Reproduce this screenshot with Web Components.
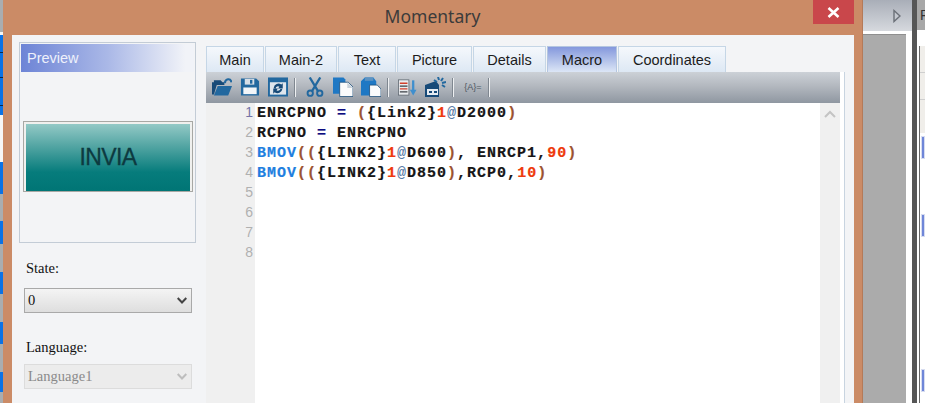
<!DOCTYPE html>
<html>
<head>
<meta charset="utf-8">
<title>Momentary</title>
<style>
  html, body { margin: 0; height: 403px; overflow: hidden; background: #ababab; }
  body { display: flex; font-family: "Liberation Sans", Arial, sans-serif; }
</style>
</head>
<body>
<side-strip></side-strip>
<app-dialog caption="Momentary">
  <preview-panel slot="left" label="INVIA"></preview-panel>
  <form-select slot="left" label="State:" value="0" gap="17"></form-select>
  <form-select slot="left" label="Language:" value="Language1" gap="26" disabled></form-select>
  <div slot="right" style="display:contents">
    <tab-bar active="Macro"></tab-bar>
    <macro-pane></macro-pane>
  </div>
</app-dialog>
<back-panel></back-panel>

<script>
// strip of the window behind the dialog, left edge
class SideStrip extends HTMLElement {
  constructor() {
    super();
    const rows = [[32,'g'],[3,'w'],[17,'b'],[1,'d'],[24,'b'],[1,'d'],[27,'b'],[1,'d'],[9,'b'],[47,'w'],[32,'b'],
      [27,'g'],[23,'b'],[28,'g'],[22,'b'],[28,'g'],[22,'b'],[28,'g'],[20,'b'],[10,'g']];
    this.attachShadow({ mode: 'open' }).innerHTML = `
      <style>
        :host { display: block; width: 3px; flex: none; height: 403px; overflow: hidden; }
        div { width: 3px; }
        .g { background: #a9adb0; } .w { background: #f6f6f6; } .b { background: #0b72e6; } .d { background: #0a2a50; }
      </style>
      ${rows.map(r => `<div class="${r[1]}" style="height:${r[0]}px"></div>`).join('')}`;
  }
}
customElements.define('side-strip', SideStrip);

// orange dialog frame with title bar
class AppDialog extends HTMLElement {
  constructor() {
    super();
    this.attachShadow({ mode: 'open' }).innerHTML = `
      <style>
        :host { display: flex; flex-direction: column; width: 860px; flex: none; height: 403px; box-sizing: border-box;
          background: #cb8b66; border-right: 1px solid #b57a58; padding: 0 8px 0 9px; overflow: hidden; }
        .bar { height: 35px; flex: none; display: grid; grid-template-columns: 1fr auto 1fr; margin-left: -1px; }
        .title { grid-column: 2; font: 17.500px "Noto Sans", sans-serif; color: #3b3b3b; line-height: 33px; }
        .close { grid-column: 3; justify-self: end; width: 41px; height: 24px; background: #c9474b;
          display: flex; align-items: center; justify-content: center; }
        .client { flex: 1; display: flex; background: #f3f4f6; padding: 7px 9px 0 7px; box-sizing: border-box; min-height: 0; }
        .left { width: 177px; flex: none; display: flex; flex-direction: column; }
        .right { flex: 1; margin: 4px 0 0 10px; display: flex; flex-direction: column; min-width: 0; }
      </style>
      <div class="bar">
        <div class="title">${this.getAttribute('caption')}</div>
        <div class="close"><svg width="13" height="11" viewBox="0 0 13 11"><path d="M1.500 1 L11.500 10 M11.500 1 L1.500 10" stroke="#fff" stroke-width="2.600" fill="none"/></svg></div>
      </div>
      <div class="client">
        <div class="left"><slot name="left"></slot></div>
        <div class="right"><slot name="right"></slot></div>
      </div>`;
  }
}
customElements.define('app-dialog', AppDialog);

class PreviewPanel extends HTMLElement {
  constructor() {
    super();
    this.attachShadow({ mode: 'open' }).innerHTML = `
      <style>
        :host { display: block; width: 177px; height: 201px; box-sizing: border-box; border: 1px solid #c3ccd6; padding: 1px; }
        .head { height: 28px; background: linear-gradient(90deg, #6d84d6, #aab8e7 50%, #f1f3f8 95%);
          color: #eef1fb; font-size: 14.500px; line-height: 28px; padding-left: 6px; }
        .btn { margin: 49px 0 0 2px; width: 170px; height: 71px; box-sizing: border-box; border: 1px solid #a8a8a4; padding: 2px 2px 0;
          background: #f0f0ee; }
        .face { height: 67px; background: linear-gradient(180deg, #93c9c6 0%, #4fa3a1 35%, #067c7c 72%, #007575 100%);
          display: flex; align-items: center; justify-content: center; font-size: 23px; color: #0d3a40; letter-spacing: -.6px; -webkit-text-stroke: .3px #0d3a40; }
      </style>
      <div class="head">Preview</div>
      <div class="btn"><div class="face">${this.getAttribute('label')}</div></div>`;
  }
}
customElements.define('preview-panel', PreviewPanel);

class FormSelect extends HTMLElement {
  constructor() {
    super();
    const off = this.hasAttribute('disabled');
    this.attachShadow({ mode: 'open' }).innerHTML = `
      <style>
        :host { display: block; font: 14.500px "Liberation Serif", serif; color: #111; margin-top: ${this.getAttribute('gap')}px; }
        label { display: block; height: 16px; line-height: 16px; padding-left: 7px; margin-bottom: ${off ? 9 : 12}px; }
        .box { margin-left: 5px; width: 168px; height: 25px; box-sizing: border-box; display: flex; align-items: center;
          justify-content: space-between; padding: 0 4px 0 3px;
          border: 1px solid ${off ? '#dcdcdc' : '#a9a9a9'};
          background: ${off ? '#ececec' : 'linear-gradient(180deg, #f4f4f4, #dedede)'};
          color: ${off ? '#8a8a8a' : '#111'}; }
      </style>
      <label>${this.getAttribute('label')}</label>
      <div class="box"><span>${this.getAttribute('value')}</span>
        <svg width="10" height="7" viewBox="0 0 10 7"><path d="M.7 1 L5 5.500 L9.300 1" fill="none" stroke="${off ? '#bdbdbd' : '#444'}" stroke-width="2"/></svg>
      </div>`;
  }
}
customElements.define('form-select', FormSelect);

class TabBar extends HTMLElement {
  constructor() {
    super();
    const tabs = [['Main',58],['Main-2',72],['Text',58],['Picture',75],['Details',73],['Macro',70],['Coordinates',108]];
    const active = this.getAttribute('active');
    this.attachShadow({ mode: 'open' }).innerHTML = `
      <style>
        :host { display: flex; gap: 1px; height: 26px; flex: none; }
        div { box-sizing: border-box; height: 26px; text-align: center; line-height: 26px; font-size: 14.500px; color: #1c1c1c;
          border: 1px solid #c5d6e6; border-bottom: 0; background: linear-gradient(180deg, #f5f8fc, #dde8f4); }
        .on { background: linear-gradient(180deg, #8498dd, #b4c3ea 55%, #dce6f6); border-color: #b4c6e0; }
      </style>
      ${tabs.map(t => `<div class="${t[0] === active ? 'on' : ''}" style="width:${t[1]}px">${t[0]}</div>`).join('')}`;
  }
}
customElements.define('tab-bar', TabBar);

const B = '#22689f', D = '#174a78';
const ICONS = {
  open: `<path d="M0 18V5h2V3h7l2 2h2v3H5L2 18z" fill="${D}"/><path d="M2 19L6 9h15l-4 10z" fill="${B}"/><path d="M13.500 6C14 1 19.500 .5 20.500 5" fill="none" stroke="${B}" stroke-width="2.200"/>`,
  save: `<path d="M1 1h16l3 3v15H1z" fill="${B}"/><rect x="5" y="1.500" width="10" height="6" fill="#d6dee6"/><rect x="10.500" y="2.500" width="2.500" height="4" fill="${B}"/><rect x="3.500" y="10.500" width="14" height="7" fill="#f2f5f8"/>`,
  sync: `<rect x="0" y="0" width="21" height="20" fill="${B}"/><rect x="2" y="5" width="17" height="13" fill="#dfe6ed"/><path d="M6 11a5 5 0 0 1 8-3.500l1.500-1.500v5.500h-5l1.500-1.800a2.500 2.500 0 0 0-4 1.800z M15 12a5 5 0 0 1-8 3.500l-1.500 1.500v-5.500h5L9 13.300a2.500 2.500 0 0 0 4-1.300z" fill="${D}"/>`,
  cut: `<path d="M5 0l8.500 14M16 0L7.500 14" stroke="${B}" stroke-width="2.400" fill="none"/><circle cx="5.500" cy="16.500" r="2.800" fill="none" stroke="${B}" stroke-width="2"/><circle cx="15.500" cy="16.500" r="2.800" fill="none" stroke="${B}" stroke-width="2"/>`,
  copy: `<path d="M0 0h11l2 2v15H0z" fill="#1f78c4"/><path d="M7 5h9l5 5v10H7z" fill="#fafbfc" stroke="${D}" stroke-width=".8"/><path d="M15 5v6h6" fill="#c9d3dc"/>`,
  paste: `<path d="M0 4l4-4h9l3 4v15H0z" fill="#1f78c4"/><path d="M4 0h9v3.500H4z" fill="#5d93c2"/><path d="M9 8h8l4 4v8H9z" fill="#fafbfc" stroke="${D}" stroke-width=".8"/>`,
  list: `<rect x="1.500" y="2.500" width="11" height="16" fill="#e9ecef" stroke="#5a626c" stroke-width=".8"/><path d="M3 6h8M3 12h8" stroke="#d2402c" stroke-width="1.500"/><path d="M3 9h8M3 15h8" stroke="#3a3f46" stroke-width="1.300"/><path d="M17 3v11" stroke="#3f8fce" stroke-width="2.400"/><path d="M13.500 13h7L17 19z" fill="#3f8fce"/>`,
  setup: `<path d="M1 8L12 4l3 4v12H1z" fill="${D}"/><rect x="3" y="12" width="11" height="6" fill="#e6ecf2"/><path d="M5 14h3v2H5zM10 14h3v2h-3z" fill="${D}"/><path d="M10 3l3 2M14 0l1 3M19 1l-2 3M22 5l-4 1M21 10l-3-2" stroke="${B}" stroke-width="2"/>`
};

class ToolIcon extends HTMLElement {
  constructor() {
    super();
    const w = this.getAttribute('w') || 20;
    this.attachShadow({ mode: 'open' }).innerHTML = `
      <style>:host { display: block; flex: none; width: ${w}px; height: 20px; margin-left: ${this.getAttribute('gap') || 0}px; }</style>
      <svg width="${w}" height="20" viewBox="0 0 ${w > 20 ? 22 : 21} 20">${ICONS[this.getAttribute('name')]}</svg>`;
  }
}
customElements.define('tool-icon', ToolIcon);

class MacroPane extends HTMLElement {
  constructor() {
    super();
    const kw = s => `<i class="k">${s}</i>`, p = s => `<i class="p">${s}</i>`, n = s => `<i class="n">${s}</i>`,
      at = '<i class="a">@</i>', eq = '<i class="e">=</i>';
    const lines = [
      `ENRCPNO ${eq} ${p('(')}{Link2}${n('1')}${at}D2000${p(')')}`,
      `RCPNO ${eq} ENRCPNO`,
      `${kw('BMOV')}${p('((')}{LINK2}${n('1')}${at}D600${p(')')}, ENRCP1,${n('90')}${p(')')}`,
      `${kw('BMOV')}${p('((')}{LINK2}${n('1')}${at}D850${p(')')},RCP0,${n('10')}${p(')')}`
    ];
    this.attachShadow({ mode: 'open' }).innerHTML = `
      <style>
        :host { display: flex; flex-direction: column; flex: 1; min-height: 0; background: #fff; border-right: 1px solid #c8d4e0; padding-right: 4px; }
        .tools { height: 31px; flex: none; display: flex; align-items: center; box-sizing: border-box; padding: 0 0 1px 6px;
          background: linear-gradient(180deg, #ccd1d7, #b3b8bf 45%, #8f97a1); }
        .sep { flex: none; width: 1px; height: 19px; background: #eef0f2; box-shadow: -1px 0 0 #7f8790; }
        .macro { flex: none; width: 22px; font-size: 9px; color: #4c5560; text-align: center; margin-left: 8px; }
        .edit { flex: 1; display: flex; min-height: 0; }
        .gutter { width: 49px; flex: none; background: #f0f0f0; box-sizing: border-box; padding-right: 2px; text-align: right;
          font-size: 14px; line-height: 20px; color: #b0b0b0; }
        .gutter div:first-child { margin-top: -1px; color: #7474a8; }
        .code { flex: 1; padding: 1px 0 0 2px; font: bold 15px/20px "Liberation Mono", monospace; letter-spacing: 1px; color: #161616; white-space: pre; -webkit-text-stroke: .2px #161616; }
        i { font-style: normal; }
        .k { color: #1f7fe0; -webkit-text-stroke: .2px #1f7fe0; } .p { color: #9c5230; -webkit-text-stroke: .2px #9c5230; }
        .n { color: #ee3a0c; -webkit-text-stroke: .2px #ee3a0c; } .a { color: #5a7da6; -webkit-text-stroke: 0; } .e { color: #0c0c80; -webkit-text-stroke: .2px #0c0c80; }
        .scroll { width: 20px; flex: none; background: #f0f0f0; display: flex; justify-content: center; padding-top: 7px; box-sizing: border-box; }
      </style>
      <div class="tools">
        <tool-icon name="open"></tool-icon>
        <tool-icon name="save" gap="8"></tool-icon>
        <tool-icon name="sync" gap="8"></tool-icon>
        <div class="sep" style="margin-left:7px"></div>
        <tool-icon name="cut" gap="9"></tool-icon>
        <tool-icon name="copy" gap="8"></tool-icon>
        <tool-icon name="paste" gap="8"></tool-icon>
        <div class="sep" style="margin-left:7px"></div>
        <tool-icon name="list" gap="8"></tool-icon>
        <tool-icon name="setup" w="22" gap="7"></tool-icon>
        <div class="sep" style="margin-left:7px"></div>
        <div class="macro">{A}=</div>
        <div class="sep" style="margin-left:5px"></div>
      </div>
      <div class="edit">
        <div class="gutter">${[1,2,3,4,5,6,7,8].map(i => `<div>${i}</div>`).join('')}</div>
        <div class="code">${lines.map(l => `<div>${l}</div>`).join('')}</div>
        <div class="scroll"><svg width="12" height="8" viewBox="0 0 12 8"><path d="M1 7L6 2l5 5" fill="none" stroke="#c4c4c4" stroke-width="2"/></svg></div>
      </div>`;
  }
}
customElements.define('macro-pane', MacroPane);

// the docked panels behind the dialog, right edge
class BackPanel extends HTMLElement {
  constructor() {
    super();
    this.attachShadow({ mode: 'open' }).innerHTML = `
      <style>
        :host { flex: 1; display: flex; height: 403px; overflow: hidden; background: #fff; }
        .dock { width: 49px; flex: none; display: flex; flex-direction: column; }
        .head { height: 31px; flex: none; background: linear-gradient(180deg, #a9aeb8, #d6d9de); display: flex; align-items: center; justify-content: flex-end; padding-right: 11px; }
        .gray { flex: 1; margin: 3px 6px 0 0; background: #ababab; border-top: 1px solid #8f8f8f; }
        .dark { width: 5px; flex: none; background: #565656; }
        .next { flex: 1; display: flex; flex-direction: column; overflow: hidden; }
        .phead { height: 30px; flex: none; background: #a8a8a8; color: #333; font-size: 14px; line-height: 30px; padding-left: 3px; overflow: hidden; }
        .body { flex: 1; margin: 16px 0 0 2px; border-left: 1px solid #666; }
        .row { background: #f0eeea; height: 26px; border-bottom: 1px solid #cfcfcf; }
        .sel { height: 23px; margin-left: 1px; background: #6f86d8; border: 1px solid #d6dcf0; box-sizing: border-box; }
      </style>
      <div class="dock">
        <div class="head"><svg width="8" height="14" viewBox="0 0 8 14"><path d="M1 1.500L7 7l-6 5.500z" fill="#c4c8cf" stroke="#6b7078" stroke-width="1.400"/></svg></div>
        <div class="gray"></div>
      </div>
      <div class="dark"></div>
      <div class="next">
        <div class="phead">P</div>
        <div class="body">
          <div class="row"></div><div class="row"></div><div class="row" style="height:33px;border:0"></div>
          <div class="sel" style="margin-top:3px"></div>
          <div class="sel" style="margin-top:55px"></div>
          <div class="sel" style="margin-top:132px"></div>
        </div>
      </div>`;
  }
}
customElements.define('back-panel', BackPanel);
</script>
</body>
</html>
